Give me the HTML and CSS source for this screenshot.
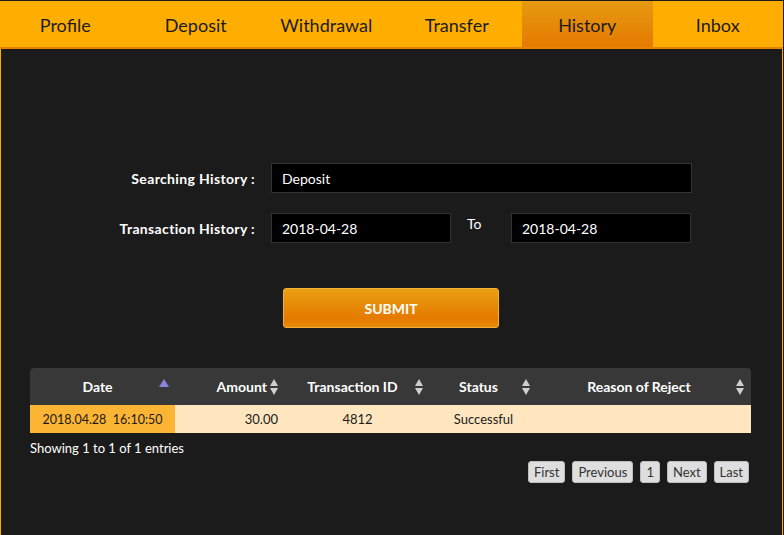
FILE: index.html
```html
<!DOCTYPE html>
<html lang="en">
<head>
  <meta charset="UTF-8" />
  <meta name="viewport" content="width=device-width, initial-scale=1.0" />
  <title>History</title>
  <link rel="stylesheet" href="styles.css">
</head>
<body>
  <div class="wrap">
    <nav class="tabs">
      <a href="#">Profile</a>
      <a href="#">Deposit</a>
      <a href="#">Withdrawal</a>
      <a href="#">Transfer</a>
      <a href="#" class="active">History</a>
      <a href="#">Inbox</a>
    </nav>

    <div class="content">
      <form class="search" onsubmit="return false">
        <div class="row">
          <label>Searching History :</label>
          <input type="text" class="wide" value="Deposit" />
        </div>
        <div class="row">
          <label>Transaction History :</label>
          <input type="text" class="date" value="2018-04-28" />
          <span class="to">To</span>
          <input type="text" class="date" value="2018-04-28" />
        </div>
        <div class="actions">
          <button class="submit">SUBMIT</button>
        </div>
      </form>

      <table class="history">
        <thead>
          <tr>
            <th class="c-date sort-asc">Date</th>
            <th class="c-amount sort">Amount</th>
            <th class="c-id sort">Transaction ID</th>
            <th class="c-status sort">Status</th>
            <th class="c-reason sort">Reason of Reject</th>
          </tr>
        </thead>
        <tbody>
          <tr>
            <td class="c-date">2018.04.28&nbsp;&nbsp;16:10:50</td>
            <td class="c-amount">30.00</td>
            <td class="c-id">4812</td>
            <td class="c-status">Successful</td>
            <td class="c-reason"></td>
          </tr>
        </tbody>
      </table>

      <div class="table-foot">
        <div class="info">Showing 1 to 1 of 1 entries</div>
        <div class="pager">
          <a href="#">First</a>
          <a href="#">Previous</a>
          <a href="#">1</a>
          <a href="#">Next</a>
          <a href="#">Last</a>
        </div>
      </div>
    </div>
  </div>
</body>
</html>
```
FILE: styles.css
```css
html, body { margin: 0; height: 100%; }
body { background: #1b1b1b; font-family: "Lato", "DejaVu Sans", sans-serif; color: #fff; }
.wrap { width: 783px; margin-top: 1px; }

.tabs { display: flex; height: 46px; background: #ffae00; border-bottom: 2px solid #e58200; }
.tabs a { flex: 1; display: flex; align-items: center; justify-content: center; padding-top: 2px; color: #1b1b1b; text-decoration: none; font-size: 18px; }
.tabs a.active { background: linear-gradient(#e69a12, #e57a00); }

.content { min-height: 486px; padding: 0 30px 0 29px; border-left: 1px solid #ffa800; border-right: 1px solid #ffa800; }

.search { padding-top: 114px; }
.row { display: flex; align-items: center; height: 30px; margin-bottom: 20px; }
.row label { width: 225px; text-align: right; font-weight: bold; font-size: 14px; letter-spacing: 0.35px; padding-right: 16px; }
.row input { height: 30px; box-sizing: border-box; background: #000; border: 1px solid #333; color: #fff; font-family: inherit; font-size: 14px; padding: 0 10px; }
.row input.wide { width: 421px; }
.row input.date { width: 180px; }
.to { width: 60px; font-size: 14px; padding-left: 16px; box-sizing: border-box; align-self: flex-start; padding-top: 2px; }

.actions { display: flex; padding-left: 253px; margin-top: 45px; }
.submit { width: 216px; height: 40px; border: 1px solid #f2b233; border-radius: 3px; background: linear-gradient(#e9a012, #e57a00 75%, #e8880c); color: #fff; font-family: inherit; font-weight: bold; font-size: 14px; }

.history { width: 721px; margin-top: 40px; border-collapse: collapse; font-size: 13px; }
.history th { background: #383838; height: 37px; padding: 0 18px 0 8px; font-size: 14px; position: relative; }
.history th:first-child { border-top-left-radius: 4px; }
.history th:last-child { border-top-right-radius: 4px; }
.history td { background: #ffe6bf; color: #1b1b1b; height: 28px; padding: 0 7px; text-align: center; }
.history td.c-date { background: #fbb433; font-size: 12.5px; }
.history .c-date { width: 145px; box-sizing: border-box; }
.history .c-amount { width: 110px; box-sizing: border-box; text-align: right; }
.history .c-id { width: 145px; box-sizing: border-box; }
.history .c-status { width: 107px; box-sizing: border-box; }

.sort::after, .sort::before { content: ""; position: absolute; right: 7px; border-left: 4px solid transparent; border-right: 4px solid transparent; }
.sort::before { top: 11px; border-bottom: 7px solid #cfcfcf; }
.sort::after { top: 20px; border-top: 7px solid #cfcfcf; }
.sort-asc::after { content: ""; position: absolute; right: 6px; top: 11px; border-left: 5px solid transparent; border-right: 5px solid transparent; border-bottom: 8px solid #8a86e0; }

.table-foot { display: flex; justify-content: space-between; align-items: flex-start; width: 721px; padding-top: 7px; }
.info { font-size: 13px; }
.pager { display: flex; gap: 7px; padding-top: 21px; padding-right: 2px; }
.pager a { background: #dedede; border: 1px solid #bdbdbd; border-radius: 3px; color: #333; font-size: 13px; text-decoration: none; padding: 0 5px; height: 20px; line-height: 20px; }
```
